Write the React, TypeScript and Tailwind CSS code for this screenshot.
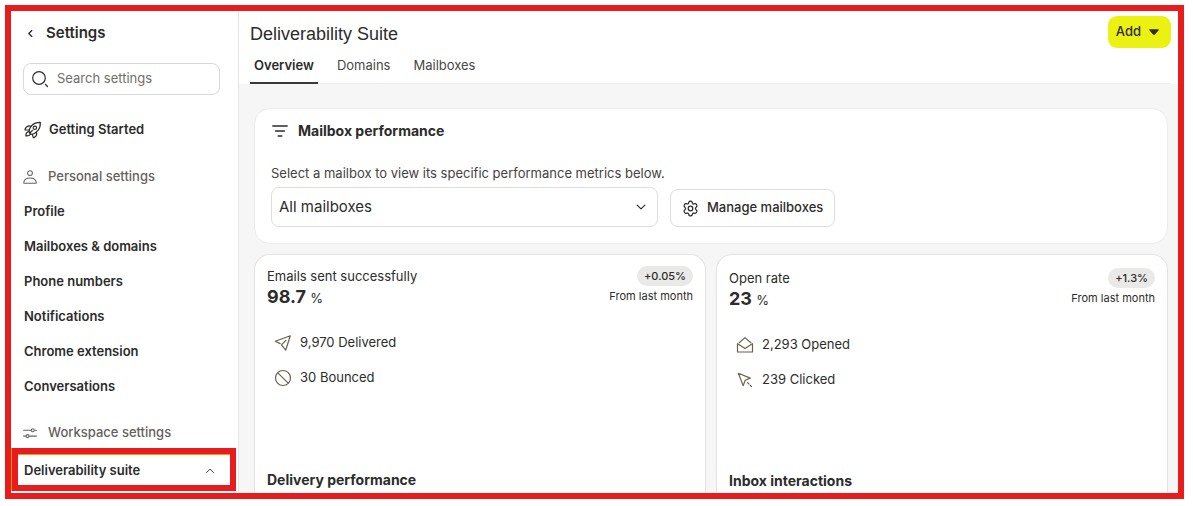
import type { ReactNode } from "react";

const personalLinks = [
  "Profile",
  "Mailboxes & domains",
  "Phone numbers",
  "Notifications",
  "Chrome extension",
  "Conversations",
];

type IconProps = { className?: string; size?: number; width?: number; children: ReactNode };

function Icon({ className = "", size = 18, width = 1.2, children }: IconProps) {
  return (
    <svg
      className={`shrink-0 ${className}`}
      width={size}
      height={size}
      viewBox="0 0 18 18"
      fill="none"
      stroke="currentColor"
      strokeWidth={width}
      strokeLinecap="round"
      strokeLinejoin="round"
      aria-hidden="true"
    >
      {children}
    </svg>
  );
}

const RocketIcon = () => (
  <Icon width={1.2}>
    <path d="M5.300 11.500C4.600 6.500 9 1.200 16.300 1.400c.5 6.900-3.900 11.200-9.100 12.100z" />
    <path d="M6.700 5.300C4.200 4.300 2.300 5.700 1 8.200c-.2.500.1.800.6.800h3.200M12.300 11.300c1 2.300-.1 4.200-2.200 5.300-.5.300-.9 0-1-.4l-.6-2.600" />
    <path d="M4.700 10.600C2.700 10.800 2 12.500 1.800 14.800c2.200.2 3.900-.3 4.600-1.600" />
    <circle cx="10.900" cy="6.800" r="1.700" />
    <path d="M5.900 12 8.500 9.300" />
  </Icon>
);

const PersonIcon = () => (
  <Icon size={14} width={1.3}>
    <circle cx="9" cy="4" r="3.100" />
    <path d="M1.700 17c-.6 0-.9-.3-.8-.9C1.500 12.200 4.700 10.300 9 10.300s7.500 1.900 8.100 5.800c.1.600-.2.900-.8.900z" />
  </Icon>
);

const SlidersIcon = () => (
  <Icon size={14} width={1.4}>
    <path d="M.8 5.500h9M.8 13h2.500M8.500 13h8.700M15.200 5.500h2" />
    <circle cx="12.500" cy="5.500" r="1.900" />
    <circle cx="5.800" cy="13" r="1.900" />
  </Icon>
);

const PlaneIcon = () => (
  <Icon>
    <path d="M16.300 1.800 1.300 7.300l4.900 2.300 M16.300 1.800l-4.600 14.400-4-5M7.500 10.900l4.300-4.500" />
  </Icon>
);

const BlockedIcon = () => (
  <Icon>
    <circle cx="9" cy="9" r="7.500" />
    <path d="m3.800 3.800 10.400 10.400" />
  </Icon>
);

const OpenMailIcon = () => (
  <Icon>
    <path d="M1.500 8v8h15V8M3.200 6.700 9 1.600l5.800 5.100" />
    <path d="M1.700 7.700 9 12.500l7.300-4.800" />
  </Icon>
);

const CursorIcon = () => (
  <Icon>
    <path d="m2.300 2.300 4.900 12.300 2-5.300 5.100-2.200zM11.600 11.600l1.500 1.500M14.300 14.300l1.200 1.200" />
  </Icon>
);

const GearIcon = () => (
  <Icon size={17} width={1.3}>
    <path d="M7.300 2.100c.3-1.100 3.100-1.100 3.400 0l.4 1.300c.2.600.8.900 1.400.8l1.400-.3c1.100-.2 2.500 2.200 1.700 3l-1 1.100c-.4.500-.4 1.500 0 2l1 1.100c.8.800-.6 3.200-1.700 3l-1.400-.3c-.6-.1-1.200.2-1.400.8l-.4 1.300c-.3 1.100-3.100 1.100-3.400 0l-.4-1.300c-.2-.6-.8-.9-1.400-.8l-1.400.3c-1.100.2-2.500-2.200-1.700-3l1-1.100c.4-.5.4-1.500 0-2l-1-1.100c-.8-.8.6-3.200 1.700-3l1.400.3c.6.1 1.200-.2 1.400-.8z" />
    <circle cx="9" cy="9" r="2.400" />
  </Icon>
);

function Sidebar() {
  return (
    <nav aria-label="Settings" className="flex w-[228px] shrink-0 flex-col border-r border-[#e4e4e4] bg-white pt-[11px]">
      <a href="#back" className="flex h-[22px] items-center gap-2 pl-3 text-[15px] font-semibold">
        <Icon size={15}>
          <path d="M10.500 5.500 7 9l3.500 3.500" strokeWidth={1.600} />
        </Icon>
        Settings
      </a>
      <label className="mt-[19px] mr-[18px] ml-3 flex h-8 items-center gap-2 rounded-lg border border-[#d8d8d6] px-[7px]">
        <Icon>
          <circle cx="8" cy="8" r="6.300" />
          <path d="m14.500 14.500 2 2" />
        </Icon>
        <input
          type="search"
          aria-label="Search settings"
          placeholder="Search settings"
          className="w-full min-w-0 bg-transparent text-[13px] outline-none placeholder:text-[#716e6a]"
        />
      </label>
      <a href="#start" className="mt-[17px] flex h-[35px] items-center gap-[7px] pl-[13px] text-[13px] font-semibold">
        <RocketIcon />
        Getting Started
      </a>
      <h2 className="mt-3 flex h-[35px] items-center gap-[11px] pl-3 text-[13px] font-medium text-[#65615d]">
        <PersonIcon />
        Personal settings
      </h2>
      <ul>
        {personalLinks.map((label) => (
          <li key={label}>
            <a href="#settings" className="flex h-[35px] items-center pl-[13px] text-[13px] font-semibold">
              {label}
            </a>
          </li>
        ))}
      </ul>
      <h2 className="mt-3.5 flex h-[30px] items-center gap-[11px] pl-3 text-[13px] font-medium text-[#65615d]">
        <SlidersIcon />
        Workspace settings
      </h2>
      <button
        type="button"
        aria-expanded="true"
        className="mr-0.5 mb-0.5 ml-px flex h-[43px] items-center justify-between border-6 border-[#e81c1c] pt-0.5 pr-[13px] pl-1.5 text-[13px] font-semibold shadow-[inset_0_1px_0_#f59a0b,-1px_0_0_#f59a0b]"
      >
        Deliverability suite
        <Icon size={14}>
          <path d="m4.500 11 4.500-4.500 4.500 4.500" />
        </Icon>
      </button>
    </nav>
  );
}

type StatCardProps = {
  title: string;
  value: string;
  change: string;
  stats: { icon: ReactNode; label: string }[];
  footer: string;
  className: string;
};

function StatCard({ title, value, change, stats, footer, className }: StatCardProps) {
  return (
    <section className={`flex flex-1 flex-col rounded-t-2xl border border-b-0 border-[#e3e3e3] bg-white px-3 ${className}`}>
      <div className="flex justify-between">
        <div>
          <h3 className="text-[13px] leading-5">{title}</h3>
          <p className="text-[18px] leading-[22px] font-bold">
            {value} <span className="text-[13px] font-normal">%</span>
          </p>
        </div>
        <div className="flex flex-col items-end">
          <span className="rounded-full bg-[#e9e9e7] px-[7px] text-[11px] leading-5 font-medium">{change}</span>
          <span className="text-[11px] leading-5">From last month</span>
        </div>
      </div>
      <ul className="mt-4 pl-[7px]">
        {stats.map((stat) => (
          <li key={stat.label} className="flex h-[35px] items-center gap-2 text-[13px]">
            <span className="text-[#6b614c]">{stat.icon}</span>
            {stat.label}
          </li>
        ))}
      </ul>
      <h3 className="mt-auto text-[14px] leading-5 font-bold">{footer}</h3>
    </section>
  );
}

export default function App() {
  return (
    <div className="flex min-h-screen bg-white pt-[5px] pr-[9px] pb-[7px] pl-[5px] font-['Inter',sans-serif] text-[#2c2c2a]">
      <div className="flex flex-1 border-6 border-[#e81c1c]">
        <Sidebar />
        <main className="flex min-w-0 flex-1 flex-col bg-[#f6f6f6]">
          <header className="bg-white pr-[7px] pl-[11px]">
            <div className="flex justify-between pt-[5px]">
              <h1 className="mt-[7px] font-['Liberation_Sans',sans-serif] text-[18px] leading-[22px]">Deliverability Suite</h1>
              <button
                type="button"
                className="flex h-8 items-center gap-2 rounded-[9px] bg-[#ebf212] pr-3 pl-2 text-[13px] font-medium"
              >
                Add
                <svg width="10" height="6" viewBox="0 0 10 6" fill="currentColor" aria-hidden="true">
                  <path d="M.5.300h9c.4 0 .5.400.3.700L6.200 5.200c-.7.800-1.700.8-2.400 0L.2 1C0 .7.100.300.500.300z" />
                </svg>
              </button>
            </div>
            <div role="tablist" className="flex gap-[15px] border-b border-[#ededed] text-[13px]">
              <button
                type="button"
                role="tab"
                aria-selected="true"
                className="-mb-px h-9 border-b-2 border-[#3a3a38] px-1 pt-0.5 font-semibold"
              >
                Overview
              </button>
              <button type="button" role="tab" aria-selected="false" className="px-1 text-[#4a4745]">
                Domains
              </button>
              <button type="button" role="tab" aria-selected="false" className="px-1 text-[#4a4745]">
                Mailboxes
              </button>
            </div>
          </header>
          <div className="flex flex-1 flex-col gap-2.5 pt-6 pr-2.5 pl-[15px]">
            <section className="rounded-2xl border border-[#ececec] bg-white px-4 pt-3 pb-4">
              <h2 className="flex items-center gap-[9px] text-[14px] leading-5 font-bold">
                <Icon>
                  <path d="M1.800 4h14.400M4.500 9h9M7.200 14h3.600" strokeWidth={1.400} />
                </Icon>
                Mailbox performance
              </h2>
              <label htmlFor="mailbox" className="mt-[23px] mb-[5px] block text-[13px] leading-[18px] text-[#454240]">
                Select a mailbox to view its specific performance metrics below.
              </label>
              <div className="flex items-end gap-3">
                <div className="grid w-[387px] items-center">
                  <select
                    id="mailbox"
                    className="col-start-1 row-start-1 h-10 w-full appearance-none rounded-lg border border-[#dededc] bg-white px-[7px] text-[15px]"
                  >
                    <option>All mailboxes</option>
                  </select>
                  <Icon size={14} className="pointer-events-none col-start-1 row-start-1 mr-2.5 justify-self-end">
                    <path d="m4 6.500 5 5 5-5" strokeWidth={1.500} />
                  </Icon>
                </div>
                <button
                  type="button"
                  className="flex h-[38px] items-center gap-2 rounded-lg border border-[#dededc] px-[11px] text-[13px] font-medium"
                >
                  <GearIcon />
                  Manage mailboxes
                </button>
              </div>
            </section>
            <div className="flex flex-1 gap-2.5">
              <StatCard
                className="pt-[11px] pb-[3px]"
                title="Emails sent successfully"
                value="98.7"
                change="+0.05%"
                footer="Delivery performance"
                stats={[
                  { icon: <PlaneIcon />, label: "9,970 Delivered" },
                  { icon: <BlockedIcon />, label: "30 Bounced" },
                ]}
              />
              <StatCard
                className="pt-[13px] pb-0.5"
                title="Open rate"
                value="23"
                change="+1.3%"
                footer="Inbox interactions"
                stats={[
                  { icon: <OpenMailIcon />, label: "2,293 Opened" },
                  { icon: <CursorIcon />, label: "239 Clicked" },
                ]}
              />
            </div>
          </div>
        </main>
      </div>
    </div>
  );
}
